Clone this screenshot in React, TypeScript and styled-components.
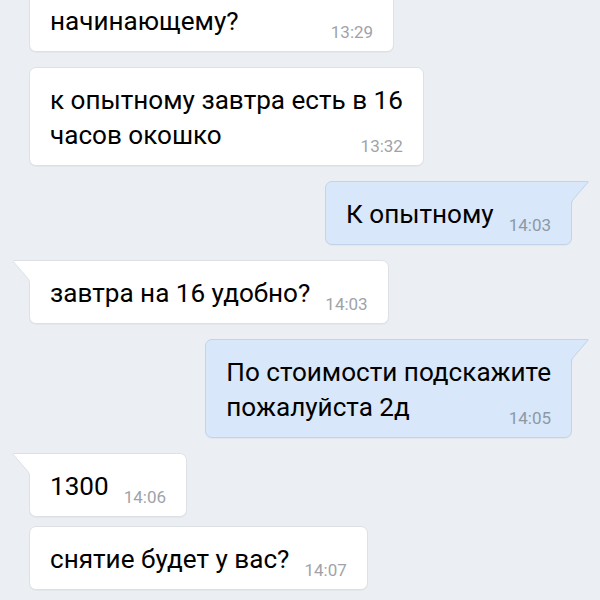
import React from "react";
import styled, { createGlobalStyle } from "styled-components";

const GlobalStyle = createGlobalStyle`
  html, body {
    margin: 0;
    padding: 0;
    background: #ebeef2;
  }
  body {
    font-family: Roboto, "Noto Sans", "Liberation Sans", sans-serif;
    -webkit-font-smoothing: antialiased;
  }
`;

type Msg = {
  out: boolean;
  lines: string[];
  time: string;
  tail: boolean;
};

const messages: Msg[] = [
  { out: false, lines: ["к опытному мастеру или к", "начинающему?"], time: "13:29", tail: false },
  { out: false, lines: ["к опытному завтра есть в 16", "часов окошко"], time: "13:32", tail: false },
  { out: true, lines: ["К опытному"], time: "14:03", tail: true },
  { out: false, lines: ["завтра на 16 удобно?"], time: "14:03", tail: true },
  { out: true, lines: ["По стоимости подскажите", "пожалуйста 2д"], time: "14:05", tail: true },
  { out: false, lines: ["1300"], time: "14:06", tail: true },
  { out: false, lines: ["снятие будет у вас?"], time: "14:07", tail: false },
];

const Screen = styled.div`
  height: 600px;
  overflow: hidden;
  display: flex;
  flex-direction: column;
  justify-content: flex-end;
  padding: 0 12px 10px 12px;
  box-sizing: border-box;
`;

const Row = styled.div<{ $out: boolean; $gap: number }>`
  display: flex;
  flex-shrink: 0;
  justify-content: ${(p) => (p.$out ? "flex-end" : "flex-start")};
  padding-left: ${(p) => (p.$out ? "0" : "17px")};
  padding-right: ${(p) => (p.$out ? "16px" : "0")};
  margin-top: ${(p) => p.$gap}px;
`;

const Bubble = styled.div<{ $out: boolean; $tail: boolean }>`
  position: relative;
  box-sizing: border-box;
  padding: 15px 20px 12px 20px;
  background: ${(p) => (p.$out ? "#d8e7f9" : "#ffffff")};
  border: 1px solid ${(p) => (p.$out ? "#c3d3e8" : "#dde1e6")};
  border-radius: 7px;
  border-top-left-radius: ${(p) => (!p.$out && p.$tail ? "0" : "7px")};
  border-top-right-radius: ${(p) => (p.$out && p.$tail ? "0" : "7px")};
  box-shadow: 0 1px 0 rgba(0, 0, 0, 0.03);
  color: #000;
  font-size: 26.1px;
  line-height: 35px;
`;

const Line = styled.div`
  white-space: nowrap;
`;

const LastLine = styled.div`
  display: flex;
  align-items: flex-end;
  white-space: nowrap;
`;

const Time = styled.span<{ $out: boolean }>`
  margin-left: auto;
  padding-left: 15px;
  font-size: 17px;
  line-height: 17px;
  margin-bottom: -2px;
  color: ${(p) => (p.$out ? "#8d98a6" : "#9fa3a9")};
`;

const TailSvg = styled.svg<{ $out: boolean }>`
  position: absolute;
  top: -1px;
  ${(p) => (p.$out ? "right: -18px;" : "left: -18px;")}
  width: 19px;
  height: 24px;
  overflow: visible;
  ${(p) => (p.$out ? "transform: scaleX(-1);" : "")}
`;

function Tail({ out }: { out: boolean }) {
  const fill = out ? "#d8e7f9" : "#ffffff";
  const stroke = out ? "#c3d3e8" : "#dde1e6";
  return (
    <TailSvg $out={out} viewBox="0 0 19 24">
      <path
        d="M19 0 H1.2 Q-0.2 0 0.7 1.1 L16 18.6 Q17.5 20.5 17.5 23 V24 H19 Z"
        fill={fill}
      />
      <path
        d="M19 0.5 H1.5 Q0.4 0.5 1.1 1.3 L16.2 18.9 Q17.5 20.6 17.5 23 V24"
        fill="none"
        stroke={stroke}
        strokeWidth="1"
      />
    </TailSvg>
  );
}

function Message({ m, gap }: { m: Msg; gap: number }) {
  const head = m.lines.slice(0, -1);
  const last = m.lines[m.lines.length - 1];
  return (
    <Row $out={m.out} $gap={gap}>
      <Bubble $out={m.out} $tail={m.tail}>
        {m.tail && <Tail out={m.out} />}
        {head.map((l, i) => (
          <Line key={i}>{l}</Line>
        ))}
        <LastLine>
          <span>{last}</span>
          <Time $out={m.out}>{m.time}</Time>
        </LastLine>
      </Bubble>
    </Row>
  );
}

export default function App() {
  return (
    <>
      <GlobalStyle />
      <Screen>
        {messages.map((m, i) => {
          const prev = messages[i - 1];
          const gap = i === 0 ? 0 : i === 1 ? 15 : prev.out === m.out ? 9 : 15;
          return <Message key={i} m={m} gap={gap} />;
        })}
      </Screen>
    </>
  );
}
